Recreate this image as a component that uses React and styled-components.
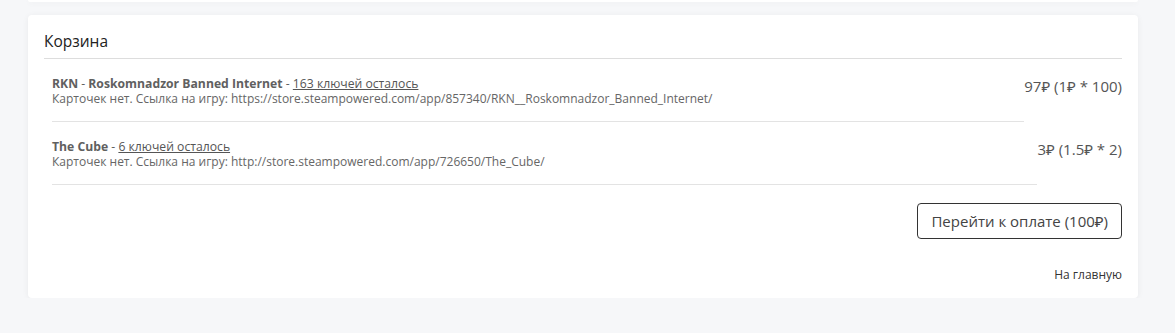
import React from "react";
import styled, { createGlobalStyle } from "styled-components";

const Global = createGlobalStyle`
  html, body { margin: 0; padding: 0; background: #f6f7f9; }
  body { font-family: "Open Sans", "Noto Sans", sans-serif; color: #333; }
`;

const Page = styled.div`
  padding: 0 37px 0 28px;
`;

const PrevCard = styled.div`
  height: 2px;
  background: #fff;
  border-radius: 0 0 4px 4px;
  box-shadow: 0 1px 6px rgba(0, 0, 0, 0.06);
  margin-bottom: 13px;
`;

const Card = styled.section`
  background: #fff;
  border-radius: 4px;
  box-shadow: 0 1px 6px rgba(0, 0, 0, 0.06);
  padding: 15px 16px 16px;
`;

const Header = styled.h2`
  margin: 0;
  font-size: 15.5px;
  font-weight: 400;
  line-height: 20px;
  color: #222;
  padding-top: 1px;
  padding-bottom: 7px;
  border-bottom: 1px solid #ddd;
`;

const List = styled.div`
  padding-left: 8px;
`;

const Row = styled.div`
  display: flex;
  align-items: flex-start;
`;

const Info = styled.div`
  flex: 1;
  padding: 17px 0 15px;
  border-bottom: 1px solid #e3e3e3;
  font-size: 12px;
  line-height: 15px;
  color: #666;
`;

const Title = styled.div`
  font-weight: 700;
  color: #606060;
  font-size: 12.2px;
`;

const Sep = styled.span`
  font-weight: 400;
`;

const Keys = styled.a`
  font-weight: 400;
  color: #555;
  text-decoration: underline;
`;

const Price = styled.div`
  padding-top: 17px;
  font-size: 15px;
  line-height: 20px;
  color: #555;
  white-space: nowrap;
`;

const Actions = styled.div`
  display: flex;
  flex-direction: column;
  align-items: flex-end;
  padding-top: 18px;
`;

const PayButton = styled.button`
  height: 36px;
  padding: 0 13px;
  background: #fff;
  border: 1px solid #333;
  border-radius: 4px;
  font-family: inherit;
  font-size: 15px;
  color: #444;
  cursor: pointer;
`;

const HomeLink = styled.a`
  margin-top: 28px;
  font-size: 12px;
  line-height: 15px;
  color: #333;
  text-decoration: none;
`;

const items = [
  {
    name: "RKN",
    full: "Roskomnadzor Banned Internet",
    keys: "163 ключей осталось",
    url: "https://store.steampowered.com/app/857340/RKN__Roskomnadzor_Banned_Internet/",
    price: "97₽ (1₽ * 100)",
  },
  {
    name: "The Cube",
    keys: "6 ключей осталось",
    url: "http://store.steampowered.com/app/726650/The_Cube/",
    price: "3₽ (1.5₽ * 2)",
  },
];

export default function App() {
  return (
    <>
      <Global />
      <Page>
        <PrevCard />
        <Card>
          <Header>Корзина</Header>
          <List>
            {items.map((it) => (
              <Row key={it.url}>
                <Info>
                  <Title>
                    {it.name}
                    {it.full && (
                      <>
                        <Sep> - </Sep>
                        {it.full}
                      </>
                    )}
                    <Sep> - </Sep>
                    <Keys href="#">{it.keys}</Keys>
                  </Title>
                  <div>Карточек нет. Ссылка на игру: {it.url}</div>
                </Info>
                <Price>{it.price}</Price>
              </Row>
            ))}
          </List>
          <Actions>
            <PayButton>Перейти к оплате (100₽)</PayButton>
            <HomeLink href="#">На главную</HomeLink>
          </Actions>
        </Card>
      </Page>
    </>
  );
}
